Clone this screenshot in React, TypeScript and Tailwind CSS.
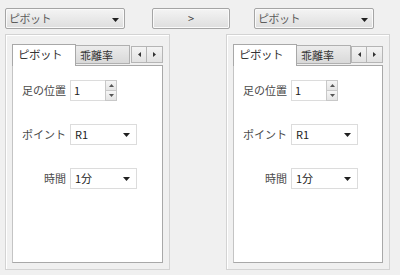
import React from "react";

const font = "font-['Noto_Sans_CJK_JP','Noto_Sans',sans-serif]";

function Arrow({ className = "" }: { className?: string }) {
  return (
    <svg width="7" height="4" viewBox="0 0 7 4" className={className}>
      <path d="M0 0 H7 L3.5 4 Z" fill="#202020" />
    </svg>
  );
}

function TopCombo({ label }: { label: string }) {
  return (
    <div className="w-[120px] h-[21px] flex items-center justify-between pl-[3px] pr-[5px] border border-[#a5a5a5] rounded-[2px] bg-gradient-to-b from-[#f4f4f4] to-[#dedede] shadow-[inset_0_0_0_1px_#fafafa] text-[#5a5a5a] text-[11px] tracking-[-0.5px]">
      <span>{label}</span>
      <Arrow className="mt-[2px]" />
    </div>
  );
}

function Spinner() {
  return (
    <div className="w-[12px] h-full flex flex-col">
      <div className="flex-1 flex items-center justify-center border border-[#c8c8c8] bg-gradient-to-b from-[#f6f6f6] to-[#e4e4e4]">
        <svg width="5" height="3" viewBox="0 0 5 3">
          <path d="M0 3 H5 L2.5 0 Z" fill="#555" />
        </svg>
      </div>
      <div className="flex-1 flex items-center justify-center border border-t-0 border-[#c8c8c8] bg-gradient-to-b from-[#f6f6f6] to-[#e4e4e4]">
        <svg width="5" height="3" viewBox="0 0 5 3">
          <path d="M0 0 H5 L2.5 3 Z" fill="#555" />
        </svg>
      </div>
    </div>
  );
}

function Field({ label, children }: { label: string; children: React.ReactNode }) {
  return (
    <div className="flex items-center">
      <div className="w-[57px] text-right pr-[4px] text-[#4a4a4a] text-[11px]">{label}</div>
      {children}
    </div>
  );
}

function SmallCombo({ value }: { value: string }) {
  return (
    <div className="w-[67px] h-[21px] flex items-center justify-between pl-[4px] pr-[6px] border border-[#dcdcdc] bg-white text-[#222] text-[11px]">
      <span>{value}</span>
      <Arrow />
    </div>
  );
}

function Group() {
  return (
    <div className="h-[236px] border border-[#d3d3d3] shadow-[inset_1px_1px_0_#fff] pt-[8px] px-[6px]">
      <div className="flex items-end h-[22px] relative z-10">
        <div className="w-[64px] h-[22px] -mb-px bg-white border border-b-0 border-[#a8a8a8] pl-[5px] pt-[1px] text-[#333] text-[11.5px] tracking-[-0.5px]">
          ピボット
        </div>
        <div className="w-[54px] h-[19px] mb-px border border-l-0 border-[#b0b0b0] bg-gradient-to-b from-[#ececec] to-[#d9d9d9] pl-[4px] text-[#333] text-[11px] leading-[18px]">
          乖離率
        </div>
        <div className="flex-1" />
        <div className="flex mb-[2px]">
          <div className="w-[16px] h-[17px] flex items-center justify-center border border-[#b5b5b5] bg-gradient-to-b from-[#f4f4f4] to-[#e2e2e2]">
            <svg width="3" height="5" viewBox="0 0 3 5">
              <path d="M3 0 V5 L0 2.5 Z" fill="#333" />
            </svg>
          </div>
          <div className="w-[16px] h-[17px] flex items-center justify-center border border-l-0 border-[#b5b5b5] bg-gradient-to-b from-[#f4f4f4] to-[#e2e2e2]">
            <svg width="3" height="5" viewBox="0 0 3 5">
              <path d="M0 0 V5 L3 2.5 Z" fill="#333" />
            </svg>
          </div>
        </div>
      </div>
      <div className="h-[198px] bg-white border border-[#a8a8a8] border-l-[#c4c4c4] pt-[14px] flex flex-col gap-[23px]">
        <Field label="足の位置">
          <div className="flex h-[21px]">
            <div className="w-[35px] h-full border border-[#dcdcdc] border-r-0 pl-[3px] flex items-center text-[#222] text-[11px]">
              1
            </div>
            <Spinner />
          </div>
        </Field>
        <Field label="ポイント">
          <SmallCombo value="R1" />
        </Field>
        <Field label="時間">
          <SmallCombo value="1分" />
        </Field>
      </div>
    </div>
  );
}

export default function App() {
  return (
    <div className={`w-[400px] h-[275px] bg-[#f0f0f0] overflow-hidden ${font}`}>
      <div className="flex items-center pt-[8px] pl-[5px]">
        <TopCombo label="ピボット" />
        <div className="ml-[27px] w-[78px] h-[21px] flex items-center justify-center border border-[#a5a5a5] rounded-[2px] bg-gradient-to-b from-[#f4f4f4] to-[#dedede] shadow-[inset_0_0_0_1px_#fafafa] text-[#444] text-[11px]">
          &gt;
        </div>
        <div className="ml-[24px]">
          <TopCombo label="ピボット" />
        </div>
      </div>
      <div className="flex pt-[5px] pl-[5px]">
        <div className="w-[165px]">
          <Group />
        </div>
        <div className="ml-[56px] w-[164px]">
          <Group />
        </div>
      </div>
    </div>
  );
}
